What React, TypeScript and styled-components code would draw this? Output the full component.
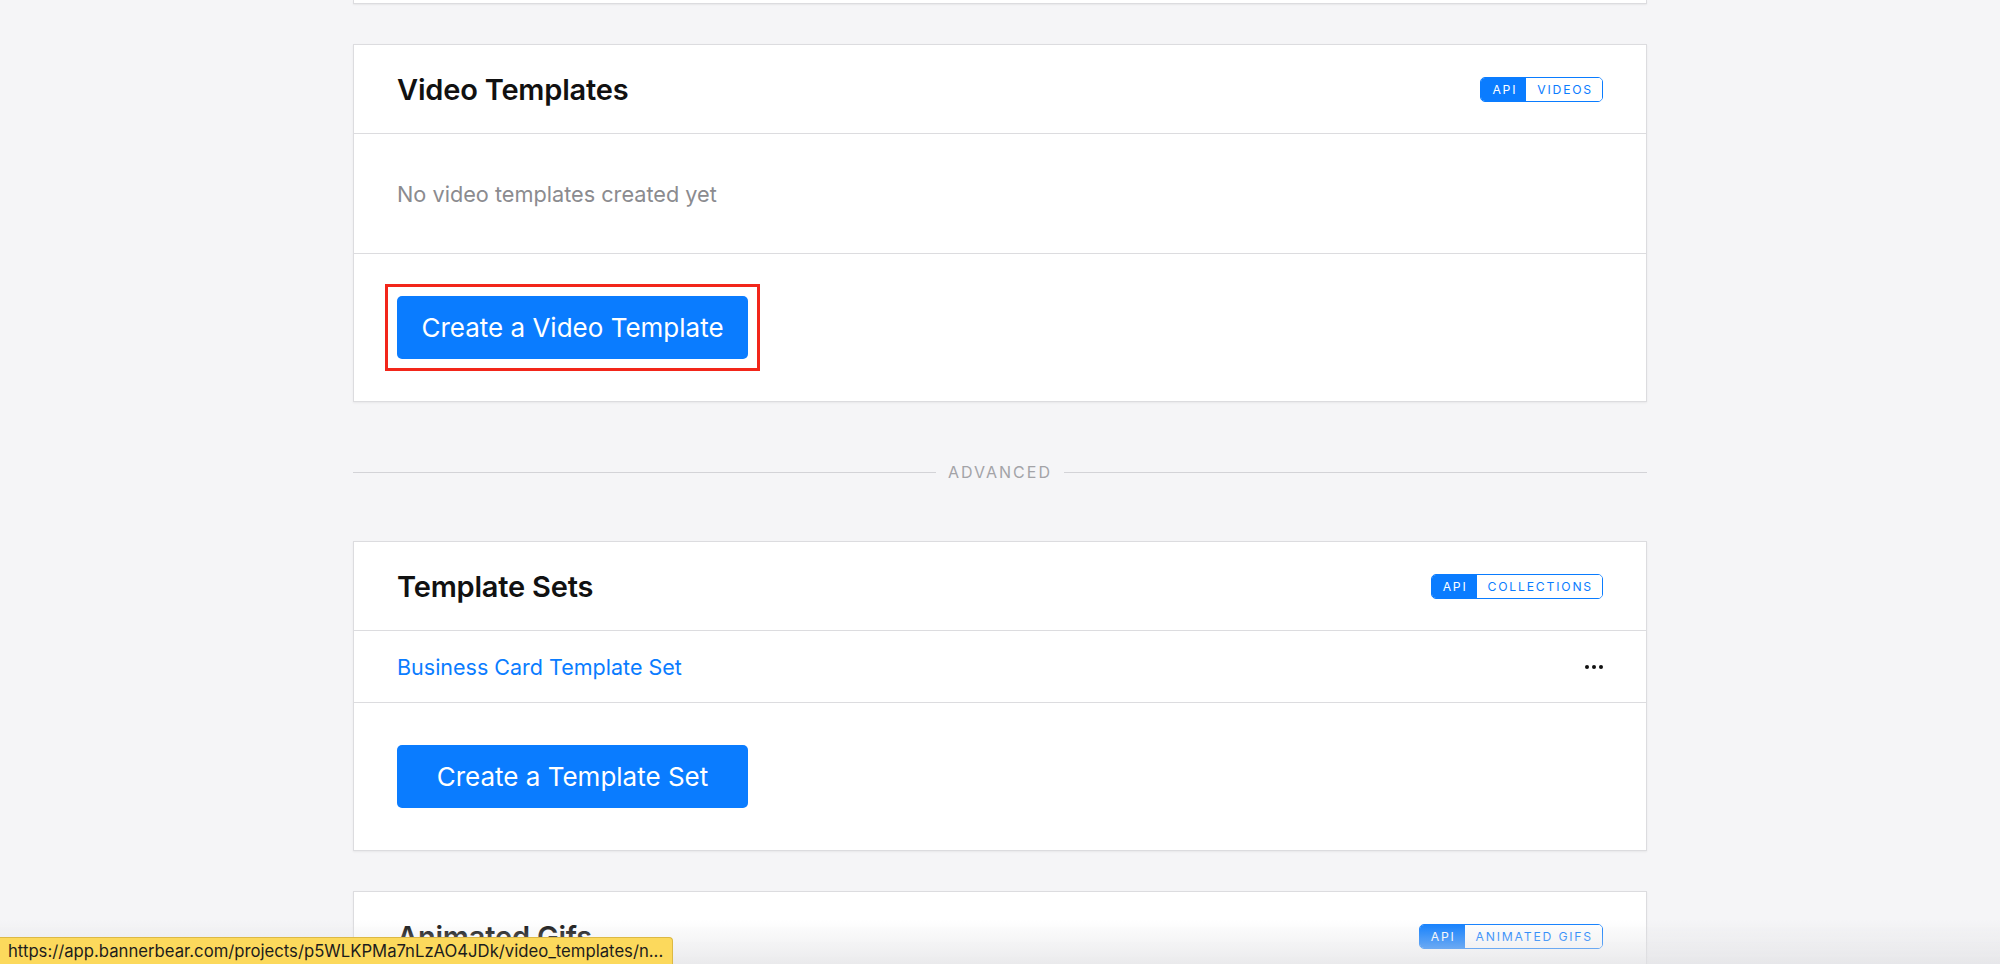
import React from 'react';
import styled, { createGlobalStyle } from 'styled-components';

const GlobalStyle = createGlobalStyle`
  html, body {
    margin: 0;
    padding: 0;
    overflow: hidden;
    background-color: #f5f5f7;
    font-family: Inter, "Liberation Sans", Arial, sans-serif;
  }
`;

const blue = '#0a7cff';

type BadgeProps = { label: string };

const ApiBadge = ({ label }: BadgeProps) => (
  <Badge>
    <BadgePart $filled>API</BadgePart>
    <BadgePart>{label}</BadgePart>
  </Badge>
);

const MoreDots = () => (
  <svg width="18" height="4" viewBox="0 0 18 4">
    <circle cx="2" cy="2" r="2" fill="#111" />
    <circle cx="9" cy="2" r="2" fill="#111" />
    <circle cx="16" cy="2" r="2" fill="#111" />
  </svg>
);

const App = () => {
  return (
    <>
      <GlobalStyle />
      <Page>
        <PrevCardEdge />

        <Card>
          <CardHeader>
            <CardTitle>Video Templates</CardTitle>
            <ApiBadge label="VIDEOS" />
          </CardHeader>
          <EmptyRow>No video templates created yet</EmptyRow>
          <CardFooter>
            <Highlight>
              <PrimaryButton>Create a Video Template</PrimaryButton>
            </Highlight>
          </CardFooter>
        </Card>

        <Divider>
          <DividerLine />
          <DividerText>ADVANCED</DividerText>
          <DividerLine />
        </Divider>

        <Card>
          <CardHeader>
            <CardTitle>Template Sets</CardTitle>
            <ApiBadge label="COLLECTIONS" />
          </CardHeader>
          <ListRow>
            <ItemLink href="#">Business Card Template Set</ItemLink>
            <MoreButton>
              <MoreDots />
            </MoreButton>
          </ListRow>
          <CardFooter>
            <PrimaryButton>Create a Template Set</PrimaryButton>
          </CardFooter>
        </Card>

        <Card>
          <CardHeader>
            <CardTitle>Animated Gifs</CardTitle>
            <ApiBadge label="ANIMATED GIFS" />
          </CardHeader>
          <EmptyRow>No animated gifs created yet</EmptyRow>
        </Card>
      </Page>
      <BottomFade />
      <StatusBar>https://app.bannerbear.com/projects/p5WLKPMa7nLzAO4JDk/video_templates/n...</StatusBar>
    </>
  );
};

export default App;

const Page = styled.div`
  width: 1294px;
  margin: 0 auto;
`;

const PrevCardEdge = styled.div`
  height: 3px;
  background-color: #fff;
  border: 1px solid #dcdcdf;
  border-top: none;
  box-shadow: 0 1px 2px rgba(0, 0, 0, 0.06);
`;

const Card = styled.section`
  margin-top: 40px;
  background-color: #fff;
  border: 1px solid #dcdcdf;
  box-shadow: 0 1px 2px rgba(0, 0, 0, 0.06);
`;

const CardHeader = styled.div`
  height: 88px;
  padding: 0 43px 0 43px;
  display: flex;
  align-items: center;
  justify-content: space-between;
  border-bottom: 1px solid #dcdcdf;
`;

const CardTitle = styled.h2`
  margin: 0;
  font-size: 29px;
  font-weight: 600;
  letter-spacing: -0.2px;
  color: #111;
`;

const Badge = styled.div`
  display: inline-flex;
  height: 25px;
  box-sizing: border-box;
  border: 1.5px solid ${blue};
  border-radius: 5px;
  overflow: hidden;
`;

const BadgePart = styled.span<{ $filled?: boolean }>`
  display: flex;
  align-items: center;
  padding: 0 9px 0 11px;
  font-size: 12.2px;
  font-weight: 400;
  letter-spacing: 1.8px;
  color: ${({ $filled }) => ($filled ? '#fff' : blue)};
  background-color: ${({ $filled }) => ($filled ? blue : '#fff')};
`;

const EmptyRow = styled.div`
  height: 119px;
  padding: 0 43px;
  display: flex;
  align-items: center;
  font-size: 21.7px;
  color: #8b8b8f;
  border-bottom: 1px solid #dcdcdf;
`;

const ListRow = styled.div`
  height: 71px;
  padding: 0 43px;
  display: flex;
  align-items: center;
  justify-content: space-between;
  border-bottom: 1px solid #dcdcdf;
`;

const ItemLink = styled.a`
  font-size: 21.5px;
  color: ${blue};
  text-decoration: none;
`;

const MoreButton = styled.button`
  display: flex;
  padding: 0;
  border: none;
  background: none;
  cursor: pointer;
`;

const CardFooter = styled.div`
  padding: 42px 43px;
  display: flex;
`;

/* red annotation box drawn around the clicked button */
const Highlight = styled.div`
  display: flex;
  margin: -12px;
  padding: 9px;
  border: 3px solid #f2261a;
`;

const PrimaryButton = styled.button`
  width: 351px;
  height: 63px;
  border: none;
  border-radius: 5px;
  background-color: ${blue};
  color: #fff;
  font-family: inherit;
  font-size: 26px;
  font-weight: 400;
  cursor: pointer;
`;

const Divider = styled.div`
  margin: 60px 0 59px;
  height: 20px;
  display: flex;
  align-items: center;
  gap: 12px;
`;

const DividerLine = styled.div`
  flex: 1;
  height: 1px;
  background-color: #d3d3d7;
`;

const DividerText = styled.span`
  font-size: 16px;
  letter-spacing: 2px;
  color: #a3a3a7;
`;

const BottomFade = styled.div`
  position: fixed;
  left: 0;
  right: 0;
  bottom: 0;
  height: 44px;
  background: linear-gradient(to bottom, rgba(235, 235, 238, 0), rgba(225, 225, 228, 0.7));
  pointer-events: none;
`;

const StatusBar = styled.div`
  position: fixed;
  left: 0;
  bottom: 0;
  height: 27px;
  box-sizing: border-box;
  padding: 0 9px 0 8px;
  display: flex;
  align-items: center;
  background-color: #fcd95c;
  border-top: 1px solid #dcb944;
  border-right: 1px solid #dcb944;
  border-top-right-radius: 4px;
  font-size: 16.7px;
  color: #1c1c1c;
  white-space: nowrap;
`;
